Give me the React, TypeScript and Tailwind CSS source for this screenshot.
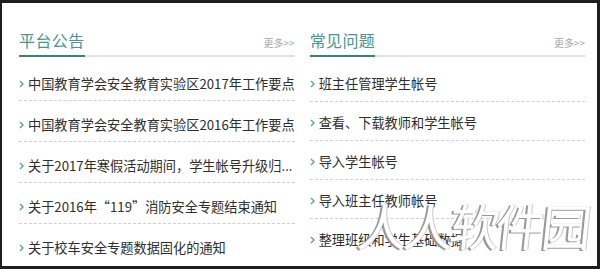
const notices = [
  "中国教育学会安全教育实验区2017年工作要点",
  "中国教育学会安全教育实验区2016年工作要点",
  "关于2017年寒假活动期间，学生帐号升级归...",
  "关于2016年“119”消防安全专题结束通知",
  "关于校车安全专题数据固化的通知",
];

const faqs = [
  "班主任管理学生帐号",
  "查看、下载教师和学生帐号",
  "导入学生帐号",
  "导入班主任教师帐号",
  "整理班级和学生基础数据",
];

function Chevron() {
  return (
    <svg width="5" height="8" viewBox="0 0 5 8" className="mr-[4px] shrink-0">
      <polyline points="1,1 4,4 1,7" fill="none" stroke="#5a9fa6" strokeWidth="1.4" />
    </svg>
  );
}

function Panel(props: { title: string; items: string[]; compact?: boolean }) {
  const { title, items, compact } = props;
  return (
    <div className="flex flex-1 flex-col">
      <div className="flex items-end justify-between border-b-2 border-[#e2e2e2]">
        <span className="-mb-[2px] border-b-2 border-[#3d7f7a] pb-[3px] text-[16px] leading-[24px] tracking-[0.4px] text-[#4a9590]">
          {title}
        </span>
        <span className="pb-[6px] text-[10px] leading-[12px] text-[#a8a8a8]">更多&gt;&gt;</span>
      </div>
      <ul>
        {items.map((item, i) => (
          <li
            key={item}
            className={`flex items-center border-b border-dashed border-[#d0d0d0] text-[13.2px] leading-[20px] text-[#2e2e2e] last:border-b-0 ${
              compact
                ? i === 0
                  ? "pt-[17px] pb-[7px]"
                  : "pt-[11px] pb-[7px]"
                : i === 0
                  ? "pt-[17px] pb-[6px]"
                  : "pt-[14px] pb-[6px]"
            }`}
          >
            <Chevron />
            <span className="whitespace-nowrap">{item}</span>
          </li>
        ))}
      </ul>
    </div>
  );
}

export default function App() {
  return (
    <div
      className="relative h-[269px] w-[600px] overflow-hidden border-t-[3px] border-r-[3px] border-b-[3px] border-l-2 border-[#1e1e1e] bg-white"
      style={{ fontFamily: '"Noto Sans CJK SC", "Noto Sans", sans-serif' }}
    >
      <div className="flex gap-[15px] pt-[25px] pr-[12px] pl-[17px]">
        <Panel title="平台公告" items={notices} />
        <Panel title="常见问题" items={faqs} compact />
      </div>
      <div className="pointer-events-none absolute top-[186px] left-[356px] -skew-x-6 text-[50px] leading-[70px] tracking-[-4px] text-white [text-shadow:-2px_1px_0_#9a9a9a,1px_0_0_#c8c8c8]">
        人人软件园
      </div>
    </div>
  );
}
